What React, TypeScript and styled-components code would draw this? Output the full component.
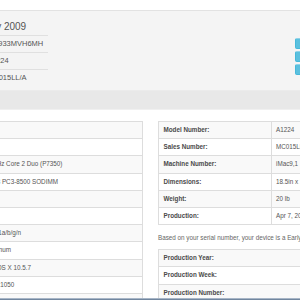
import React from "react";
import styled, { createGlobalStyle } from "styled-components";

const GlobalStyle = createGlobalStyle`
  html, body {
    margin: 0;
    padding: 0;
    background: #fff;
  }
  body {
    font-family: "Liberation Sans", Arial, sans-serif;
    color: #555;
  }
`;

type Row = { label: string; value: string };

const headerRows: Row[] = [
  { label: "Serial:", value: "W8933MVH6MH" },
  { label: "Model:", value: "A1224" },
  { label: "Part:", value: "MC015LL/A" },
];

const specRows: Row[] = [
  { label: "Family:", value: "iMac" },
  { label: "Screen:", value: "20in" },
  { label: "Processor:", value: "2.0GHz Core 2 Duo (P7350)" },
  { label: "Memory:", value: "DDR3 PC3-8500 SODIMM" },
  { label: "Storage:", value: "SATA" },
  { label: "Camera:", value: "iSight" },
  { label: "Wireless:", value: "802.11a/b/g/n" },
  { label: "Enclosure:", value: "Aluminum" },
  { label: "Original OS:", value: "Mac OS X 10.5.7" },
  { label: "Resolution:", value: "1680x1050" },
  { label: "Ports:", value: "USB" },
];

const modelRows: Row[] = [
  { label: "Model Number:", value: "A1224" },
  { label: "Sales Number:", value: "MC015LL/A" },
  { label: "Machine Number:", value: "iMac9,1" },
  { label: "Dimensions:", value: "18.5in x 19.1in x 7.4in" },
  { label: "Weight:", value: "20 lb" },
  { label: "Production:", value: "Apr 7, 2009" },
];

const productionRows: Row[] = [
  { label: "Production Year:", value: "2009" },
  { label: "Production Week:", value: "15" },
  { label: "Production Number:", value: "3MV" },
];

export default function App() {
  return (
    <Viewport>
      <GlobalStyle />
      <Page>
        <TopBar />
        <Header>
          <InfoBlock>
            <Title>iMac 20" Early 2009</Title>
            <InfoTable>
              <tbody>
                {headerRows.map((r) => (
                  <tr key={r.label}>
                    <InfoLabel>{r.label}</InfoLabel>
                    <InfoValue>{r.value}</InfoValue>
                  </tr>
                ))}
              </tbody>
            </InfoTable>
          </InfoBlock>
          <ButtonStack>
            <InfoButton />
            <InfoButton />
            <InfoButton />
          </ButtonStack>
        </Header>
        <NavBand />
        <Content>
          <Column>
            <SpecTable $labelWidth="37.5px">
              <tbody>
                {specRows.map((r) => (
                  <tr key={r.label}>
                    <LabelCell>{r.label}</LabelCell>
                    <ValueCell>{r.value}</ValueCell>
                  </tr>
                ))}
              </tbody>
            </SpecTable>
          </Column>
          <Column>
            <SpecTable $labelWidth="102.5px">
              <tbody>
                {modelRows.map((r) => (
                  <tr key={r.label}>
                    <LabelCell>{r.label}</LabelCell>
                    <ValueCell>{r.value}</ValueCell>
                  </tr>
                ))}
              </tbody>
            </SpecTable>
            <Note>Based on your serial number, your device is a Early 2009 iMac.</Note>
            <SpecTable $labelWidth="140px">
              <tbody>
                {productionRows.map((r) => (
                  <tr key={r.label}>
                    <LabelCell>{r.label}</LabelCell>
                    <ValueCell>{r.value}</ValueCell>
                  </tr>
                ))}
              </tbody>
            </SpecTable>
          </Column>
        </Content>
      </Page>
      <Footer />
    </Viewport>
  );
}

const Viewport = styled.div`
  position: relative;
  width: 300px;
  height: 300px;
  overflow: hidden;
`;

const Page = styled.div`
  width: 420px;
  margin-left: -70px;
`;

const TopBar = styled.div`
  height: 10px;
  background: #fff;
  border-bottom: 1px solid #e2e2e2;
`;

const Header = styled.div`
  display: flex;
  align-items: flex-start;
  box-sizing: border-box;
  height: 80px;
  padding: 0 15px 0 7px;
  background: #f4f4f4;
  border-bottom: 1px solid #ebebeb;
`;

const InfoBlock = styled.div`
  width: 111px;
`;

const Title = styled.div`
  padding-top: 9.5px;
  margin-bottom: 2px;
  font-size: 10px;
  line-height: 12px;
  white-space: nowrap;
  color: #555;
`;

const InfoTable = styled.table`
  width: 100%;
  border-collapse: collapse;
  td {
    border-top: 1px solid #e0e0e0;
    padding: 4px;
    font-size: 7.5px;
    line-height: 8.2px;
    white-space: nowrap;
    color: #555;
  }
`;

const InfoLabel = styled.td`
  width: 38px;
  font-weight: bold;
`;

const InfoValue = styled.td``;

const ButtonStack = styled.div`
  display: flex;
  flex-direction: column;
  gap: 2px;
  margin-left: auto;
  margin-top: 27px;
`;

const InfoButton = styled.div`
  box-sizing: border-box;
  width: 40px;
  height: 11px;
  background: #5bc0de;
  border: 1px solid #46b8da;
  border-top-color: #8fd3e8;
  border-radius: 2px;
`;

const NavBand = styled.div`
  height: 18px;
  background: #e8e8e8;
  border-bottom: 1px solid #f0f0f0;
`;

const Content = styled.div`
  display: grid;
  grid-template-columns: 213px 192px;
  column-gap: 15px;
  padding-top: 11px;
`;

const Column = styled.div`
  min-width: 0;
`;

const SpecTable = styled.table<{ $labelWidth: string }>`
  width: 100%;
  table-layout: fixed;
  border-collapse: collapse;
  border: 1px solid #dddddd;
  td {
    border-top: 1px solid #dddddd;
    padding: 4px 4.5px;
    font-size: 6.3px;
    line-height: 8.2px;
    white-space: nowrap;
    overflow: visible;
  }
  td:first-child {
    width: ${({ $labelWidth }) => $labelWidth};
  }
  tr:nth-child(odd) {
    background: #f9f9f9;
  }
`;

const LabelCell = styled.td`
  font-weight: bold;
  color: #4a4a4a;
`;

const ValueCell = styled.td`
  border-left: 1px solid #dddddd;
  color: #555;
`;

const Note = styled.p`
  margin: 9px 0 7px;
  font-size: 6.3px;
  line-height: 8px;
  white-space: nowrap;
  color: #666;
`;

const Footer = styled.div`
  position: absolute;
  left: 0;
  right: 0;
  bottom: 0;
  height: 1px;
  background: #71869f;
  border-top: 1px solid #a7b5c6;
`;
